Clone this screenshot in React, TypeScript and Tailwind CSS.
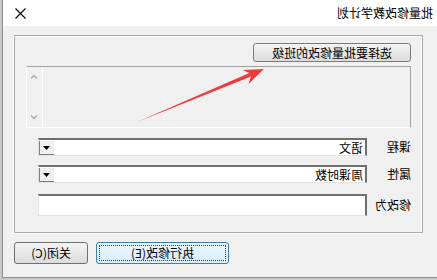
import type { ReactNode } from "react";

const font = { fontFamily: '"Noto Sans CJK SC", "Noto Sans", sans-serif' };

// The reference is a horizontally flipped screenshot of a Windows dialog,
// so the dialog is laid out normally and then mirrored as a whole.
function Combo({ value }: { value: string }) {
  return (
    <div className="flex h-[18px] w-[329px] border-t-2 border-l-2 border-[#6e6e6e] border-b border-r border-b-[#e3e3e3] border-r-[#e3e3e3] bg-white">
      <div className="flex-1 pl-[2px] text-[12px] leading-[15px] text-black">{value}</div>
      <div className="flex w-[16px] items-center justify-center border-l border-t border-white bg-[#f0f0f0] shadow-[inset_-1px_-1px_0_#808080]">
        <svg width="7" height="4" viewBox="0 0 7 4">
          <path d="M0 0h7L3.5 4z" fill="#000" />
        </svg>
      </div>
    </div>
  );
}

function Row({ label, children, className }: { label: string; children: ReactNode; className?: string }) {
  return (
    <div className={"flex items-center " + (className ?? "")}>
      <div className="w-[55px] pl-[11px] text-[12px] text-black">{label}</div>
      {children}
    </div>
  );
}

function Chevron({ up }: { up?: boolean }) {
  return (
    <svg width="8" height="5" viewBox="0 0 8 5">
      <path d={up ? "M1 4.5L4 1.5L7 4.5" : "M1 0.5L4 3.5L7 0.5"} fill="none" stroke="#a8a8a8" strokeWidth="1.3" />
    </svg>
  );
}

export default function App() {
  return (
    <div className="relative h-[280px] w-[437px] overflow-hidden bg-[#c9c9c9]" style={font}>
      <div className="-scale-x-100 h-[280px] w-[437px]">
        <div className="flex h-[278px] w-[435px] flex-col border-r border-b border-[#8c8c8c] bg-[#f0f0f0]">
          {/* title bar */}
          <div className="flex h-[26px] items-center justify-between bg-white pl-[4px] pr-[12px]">
            <span className="text-[12px] text-black">批量修改教学计划</span>
            <svg width="11" height="11" viewBox="0 0 11 11">
              <path d="M0.5 0.5L10.5 10.5M10.5 0.5L0.5 10.5" stroke="#000" strokeWidth="1.1" />
            </svg>
          </div>

          {/* group box */}
          <div className="ml-[14px] mt-[9px] h-[198px] w-[409px] border border-[#a9a9a9] shadow-[inset_1px_1px_0_#fff,1px_1px_0_#fff]">
            <div className="pl-[11px] pt-[7px]">
              <button className="flex h-[19px] w-[158px] items-center justify-center rounded-[3px] border border-[#7a7a7a] bg-gradient-to-b from-[#f4f4f4] to-[#dcdcdc] text-[12px] text-black">
                选择要批量修改的班级
              </button>
              <div className="mt-[4px] flex h-[62px] w-[385px] border border-[#a0a0a0] border-b-white border-r-white bg-[#f0f0f0]">
                <div className="flex-1" />
                <div className="flex w-[16px] flex-col items-center justify-between border-l border-white py-[7px]">
                  <Chevron up />
                  <Chevron />
                </div>
              </div>
            </div>
            <Row label="课程" className="mt-[10px]">
              <Combo value="语文" />
            </Row>
            <Row label="属性" className="mt-[9px]">
              <Combo value="周课时数" />
            </Row>
            <Row label="修改为" className="mt-[11px]">
              <div className="h-[22px] w-[329px] border-t-2 border-l-2 border-[#6e6e6e] border-b border-r border-b-[#e3e3e3] border-r-[#e3e3e3] bg-white" />
            </Row>
          </div>

          {/* buttons */}
          <div className="mt-[9px] flex gap-[8px] pl-[208px]">
            <button className="flex h-[22px] w-[133px] items-center justify-center rounded-[3px] border border-[#3c7fb1] bg-gradient-to-b from-[#eaf6fd] to-[#d9eefc] p-[2px] text-[12px] text-black">
              <span className="flex h-full w-full items-center justify-center border border-dotted border-[#3a3a3a]">执行修改(E)</span>
            </button>
            <button className="flex h-[22px] w-[74px] items-center justify-center rounded-[3px] border border-[#707070] bg-gradient-to-b from-[#f4f4f4] to-[#dcdcdc] text-[12px] text-black">
              关闭(C)
            </button>
          </div>
        </div>
      </div>

      {/* red annotation arrow, drawn in the picture's own (mirrored) coordinates */}
      <svg className="pointer-events-none absolute left-0 top-0" width="437" height="280" viewBox="0 0 437 280">
        <polygon points="137,122 251,76.6 248.5,84 264,69 242.8,70 249.4,73" fill="#ee3a3b" />
      </svg>
    </div>
  );
}
